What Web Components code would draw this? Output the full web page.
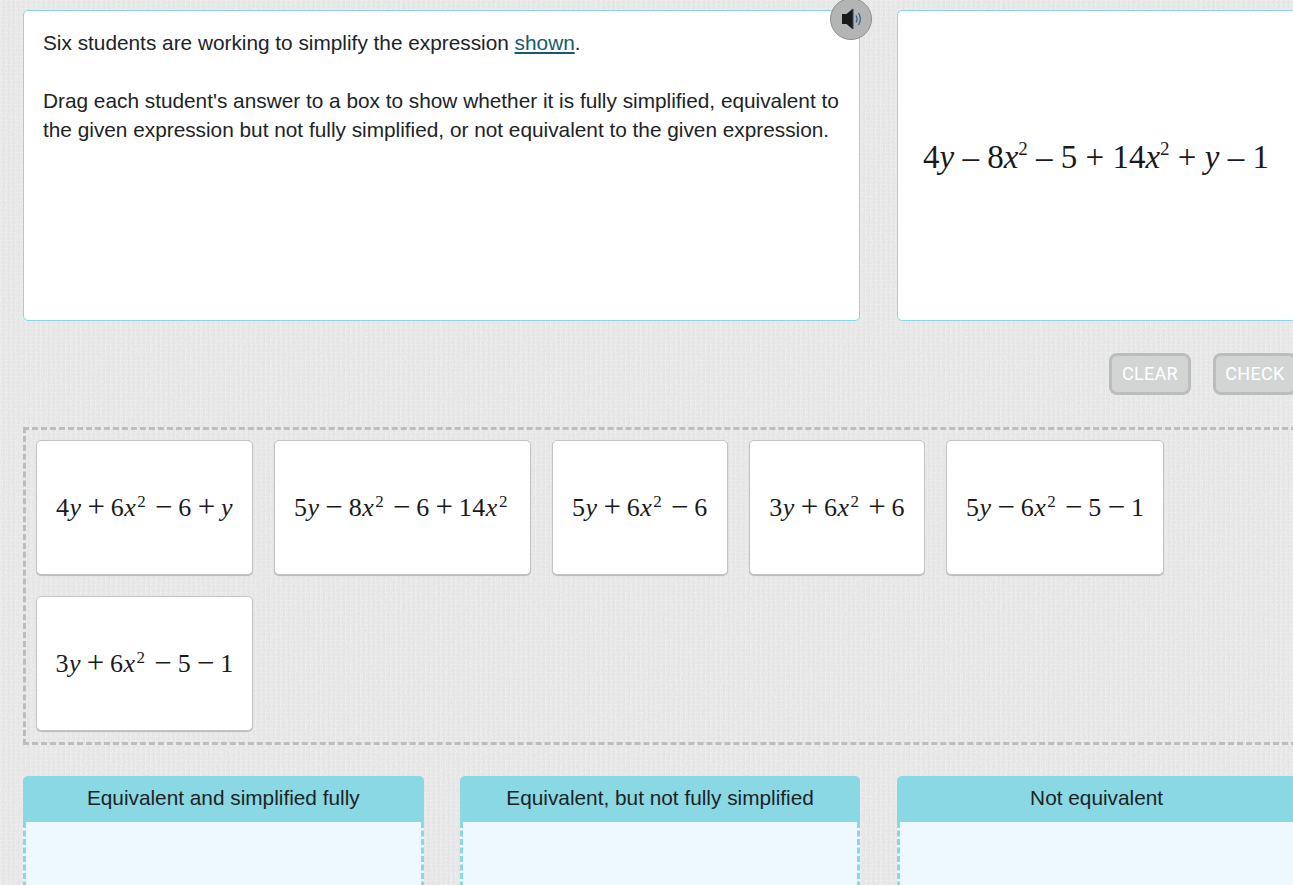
<!DOCTYPE html>
<html lang="en">
<head>
<meta charset="utf-8">
<title>Simplify the expression</title>
<style>
  html, body {
    margin: 0;
    height: 885px;
    overflow: hidden;
  }
  body {
    font-family: "Liberation Sans", Arial, sans-serif;
    color: #1c2326;
    background-color: #ebebeb;
    background-image:
      url("data:image/svg+xml,%3Csvg xmlns='http://www.w3.org/2000/svg' width='300' height='300'%3E%3Cfilter id='n'%3E%3CfeTurbulence type='fractalNoise' baseFrequency='.55 .75' numOctaves='2' seed='4' stitchTiles='stitch'/%3E%3CfeColorMatrix values='0 0 0 0 0 0 0 0 0 0 0 0 0 0 0 0 0 0 .55 -.2'/%3E%3C/filter%3E%3Crect width='300' height='300' filter='url(%23n)' opacity='.12'/%3E%3C/svg%3E"),
      repeating-linear-gradient(90deg, rgba(255,255,255,.16) 0 1px, transparent 1px 3px, rgba(0,0,0,.012) 3px 5px),
      repeating-linear-gradient(0deg, rgba(255,255,255,.14) 0 1px, transparent 1px 4px);
  }
  main {
    box-sizing: border-box;
    width: 1297px;
    padding: 10px 0 0 23px;
  }
</style>
</head>
<body>
<main>
  <top-row>
    <prompt-panel>
      Six students are working to simplify the expression <a href="#">shown</a>.<br><br>
      Drag each student's answer to a box to show whether it is fully simplified, equivalent to the given expression but not fully simplified, or not equivalent to the given expression.
    </prompt-panel>
    <expr-panel>4<i>y</i> – 8<i>x</i><sup>2</sup> – 5 + 14<i>x</i><sup>2</sup> + <i>y</i> – 1</expr-panel>
  </top-row>
  <action-bar>
    <action-button style="--w:82px">CLEAR</action-button>
    <action-button style="--w:84px">CHECK</action-button>
  </action-bar>
  <answer-tray>
    <answer-card style="--w:217.1px"><math-expr expr="4y + 6x^ - 6 + y"></math-expr></answer-card>
    <answer-card style="--w:257.1px"><math-expr expr="5y - 8x^ - 6 + 14x^"></math-expr></answer-card>
    <answer-card style="--w:176.3px"><math-expr expr="5y + 6x^ - 6"></math-expr></answer-card>
    <answer-card style="--w:176.6px"><math-expr expr="3y + 6x^ + 6"></math-expr></answer-card>
    <answer-card style="--w:218px"><math-expr expr="5y - 6x^ - 5 - 1"></math-expr></answer-card>
    <answer-card style="--w:217.1px"><math-expr expr="3y + 6x^ - 5 - 1"></math-expr></answer-card>
  </answer-tray>
  <drop-row>
    <drop-column>Equivalent and simplified fully</drop-column>
    <drop-column>Equivalent, but not fully simplified</drop-column>
    <drop-column>Not equivalent</drop-column>
  </drop-row>
</main>

<script>
function define(name, css, html, setup) {
  customElements.define(name, class extends HTMLElement {
    constructor() {
      super();
      this.attachShadow({ mode: 'open' });
      this.shadowRoot.innerHTML = `<style>${css}</style>${html}`;
    }
    connectedCallback() {
      if (setup) setup(this);
    }
  });
}

define('top-row', `
  :host { display: grid; grid-template-columns: 837px 400px; gap: 37px; height: 311px; }
`, `<slot></slot>`);

define('audio-button', `
  :host {
    position: absolute; top: -13px; right: -13px;
    box-sizing: border-box; width: 42px; height: 42px;
    border-radius: 50%;
    background: #b3b5b5; border: 1px solid #8e9090;
    display: flex; align-items: center; justify-content: center;
  }
  svg { display: block; margin-left: 1px; }
`, `<svg width="22" height="24" viewBox="0 0 22 24" aria-hidden="true">
  <path d="M1 7h4.500L12 1.500v21L5.500 17H1z" fill="#1a1a1a"/>
  <path d="M12.200 2v20" stroke="#2f6fb5" stroke-width="1"/>
  <path d="M15 8.500c1.300 2.200 1.300 4.800 0 7" fill="none" stroke="#3a5f8a" stroke-width="1.300"/>
  <path d="M17.500 6c2.200 3.600 2.200 8.400 0 12" fill="none" stroke="#3a5f8a" stroke-width="1.300"/>
</svg>`);

define('prompt-panel', `
  :host {
    display: block; position: relative; box-sizing: border-box;
    background: #fff; border: 1px solid #89d8e3; border-radius: 5px;
    padding: 17px 19px;
    font-size: 20.8px; line-height: 29px; color: #1c2326;
  }
  ::slotted(a) { color: #17596b; }
`, `<slot></slot><audio-button></audio-button>`);

define('expr-panel', `
  :host {
    display: flex; align-items: center; box-sizing: border-box;
    background: #fff; border: 1px solid #89d8e3; border-radius: 5px;
    padding: 0 0 16px 25px;
    font-family: "Liberation Serif", "Times New Roman", serif;
    font-size: 33px; color: #1a1a1a; white-space: nowrap;
  }
  ::slotted(sup) { font-size: 19px; line-height: 0; vertical-align: 13px; }
`, `<span><slot></slot></span>`);

define('action-bar', `
  :host { display: flex; justify-content: flex-end; gap: 22px; margin-top: 32px; height: 42px; }
`, `<slot></slot>`);

define('action-button', `
  :host {
    display: flex; align-items: center; justify-content: center;
    box-sizing: border-box; width: var(--w); height: 42px; padding-bottom: 2px;
    background: #d3d5d5; border: 3px solid #bcbebe; border-radius: 8px;
    font-family: Roboto, "Liberation Sans", sans-serif;
    font-size: 18px; font-weight: 400; letter-spacing: .3px; color: #fff;
  }
`, `<slot></slot>`);

define('answer-tray', `
  :host {
    display: flex; flex-wrap: wrap; align-content: flex-start; gap: 21px 20.8px;
    box-sizing: border-box; height: 318px; margin-top: 32px;
    padding: 10px 10px 0 10px;
    border: 3px dashed #bcbebe;
  }
`, `<slot></slot>`);

define('answer-card', `
  :host {
    display: flex; align-items: center; justify-content: center;
    box-sizing: border-box; width: var(--w); height: 135px;
    background: #fff; border: 1px solid #c2c4c4; border-radius: 5px;
    box-shadow: 0 1px 1px rgba(0,0,0,.2);
  }
`, `<slot></slot>`);

define('math-expr', `
  :host {
    display: inline-block; white-space: nowrap;
    font-family: "Liberation Serif", "Times New Roman", serif;
    font-size: 26px; letter-spacing: .5px; color: #1a1a1a;
  }
  i { font-style: italic; }
  .op { font-size: 31px; margin: 0 5.8px; vertical-align: -1px; line-height: 0; letter-spacing: 0; }
  sup { font-size: 17px; line-height: 0; vertical-align: 9px; margin: 0 3px 0 1px; }
`, `<span id="out"></span>`, el => {
  // "x^" means squared, a spaced token of + or - is an operator
  const out = el.shadowRoot.getElementById('out');
  out.innerHTML = el.getAttribute('expr').split(' ').map(tok => {
    if (tok === '+') return '<span class="op">+</span>';
    if (tok === '-') return '<span class="op">−</span>';
    return tok.replace(/([xy])/g, '<i>$1</i>').replace('^', '<sup>2</sup>');
  }).join('');
});

define('drop-row', `
  :host { display: grid; grid-template-columns: 400.6px 400px 400px; gap: 36.5px; margin-top: 31px; }
`, `<slot></slot>`);

define('drop-column', `
  :host { display: block; height: 120px; }
  .head {
    box-sizing: border-box; height: 46px; padding-bottom: 2px;
    display: flex; align-items: center; justify-content: center;
    background: #89d8e3; border-radius: 5px 5px 0 0;
    font-size: 20.8px; color: #1c2326;
  }
  .body {
    box-sizing: border-box; height: 74px;
    background: #edf9fe;
    border-left: 3px dashed #89d8e3; border-right: 3px dashed #89d8e3;
  }
`, `<div class="head"><slot></slot></div><div class="body"></div>`);
</script>
</body>
</html>
